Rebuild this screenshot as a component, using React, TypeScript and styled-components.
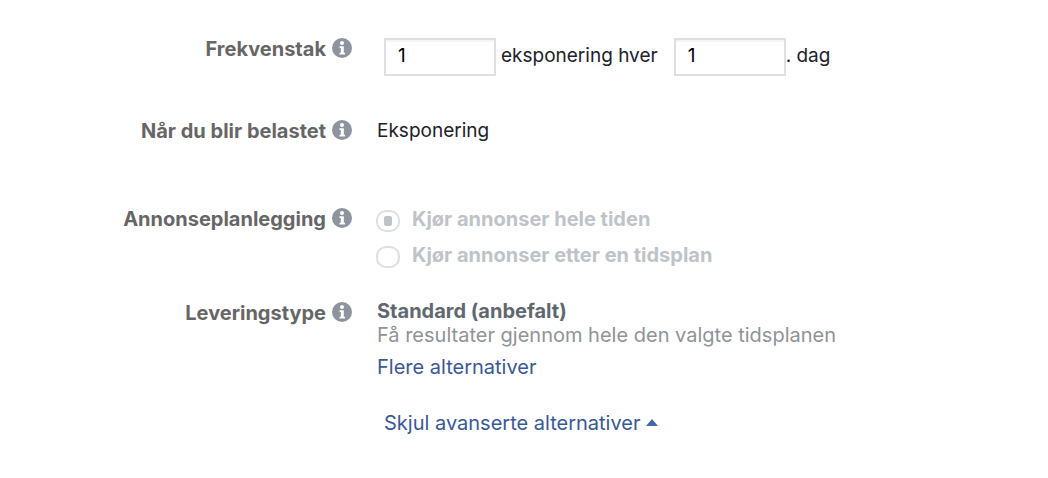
import React from "react";
import styled, { createGlobalStyle } from "styled-components";

const GlobalStyle = createGlobalStyle`
  *, *::before, *::after { box-sizing: border-box; }
  body {
    margin: 0;
    background: #fff;
    color: #1d2129;
    font: 400 20px/24px Inter, "Liberation Sans", sans-serif;
  }
`;

const Form = styled.form`
  padding: 37px 0 32px;
`;

const Row = styled.div<{ $after: number }>`
  display: grid;
  grid-template-columns: minmax(0, 352px) minmax(0, 1fr);
  column-gap: 25px;
  align-items: start;
  margin-bottom: ${(p) => p.$after}px;
`;

const LabelCell = styled.div<{ $drop?: boolean }>`
  display: flex;
  justify-content: flex-end;
  align-items: center;
  gap: 6px;
  padding-top: ${(p) => (p.$drop ? 2 : 0)}px;
  color: #666;
  font-weight: 700;
`;

const InfoButton = styled.button`
  display: block;
  width: 20px;
  height: 20px;
  margin-bottom: 2px;
  padding: 0;
  border: 0;
  background: none;
  cursor: pointer;

  svg { display: block; }
`;

const Frequency = styled.div`
  display: flex;
  align-items: flex-start;
  padding: 1px 0 0 7px;
  font-size: 19px;
`;

const NumberInput = styled.input`
  width: 112px;
  height: 38px;
  padding: 0 12px 4px;
  border: 2px solid #dddfe2;
  border-radius: 0;
  background: #fff;
  box-shadow: inset 0 2px 0 #f3f4f5;
  color: #000;
  font: inherit;
  outline: none;
`;

const Between = styled.span`
  padding: 6px 16px 0 5px;
`;

const After = styled.span`
  padding-top: 6px;
`;

const Value = styled.div`
  font-size: 19px;
`;

const Options = styled.div`
  display: flex;
  flex-direction: column;
  gap: 12px;
`;

const Option = styled.label`
  display: flex;
  align-items: center;
  gap: 12px;
  height: 24px;
  margin-left: -1px;
  color: #bec3c9;
  font-weight: 700;
`;

const Radio = styled.input`
  appearance: none;
  display: grid;
  place-items: center;
  width: 24px;
  height: 22px;
  margin: 4px 0 0;
  border: 2px solid #dddfe2;
  border-radius: 10px;
  background: #fff;

  &:checked::before {
    content: "";
    width: 8px;
    height: 10px;
    border-radius: 2px;
    background: #bec3c9;
  }
`;

const Strong = styled.div`
  color: #606770;
  font-weight: 700;
`;

const Hint = styled.div`
  margin-bottom: 8px;
  color: #909397;
`;

const Link = styled.a`
  color: #385898;
  text-decoration: none;
`;

const Toggle = styled.button`
  display: flex;
  align-items: center;
  gap: 6px;
  margin-left: 7px;
  padding: 0;
  border: 0;
  background: none;
  color: #385898;
  font: inherit;
  cursor: pointer;

  svg { margin-bottom: 2px; }
`;

const Info = ({ topic }: { topic: string }) => (
  <InfoButton type="button" aria-label={topic}>
    <svg width="20" height="20" viewBox="0 0 20 20" aria-hidden="true">
      <circle cx="10" cy="10" r="10" fill="#8d949e" />
      <circle cx="10" cy="5" r="2" fill="#fff" />
      <path d="M7.5 8.2h4.3v6.6h1.2v1.7H7.5v-1.7h1.3V9.9H7.5z" fill="#fff" />
    </svg>
  </InfoButton>
);

export default function App() {
  return (
    <>
      <GlobalStyle />
      <Form>
        <Row $after={43}>
          <LabelCell>
            <label htmlFor="exposures">Frekvenstak</label>
            <Info topic="Frekvenstak" />
          </LabelCell>
          <Frequency>
            <NumberInput id="exposures" type="text" inputMode="numeric" defaultValue="1" />
            <Between>eksponering hver</Between>
            <NumberInput id="days" type="text" inputMode="numeric" defaultValue="1" aria-labelledby="days-unit" />
            <After id="days-unit">. dag</After>
          </Frequency>
        </Row>
        <Row $after={64}>
          <LabelCell>
            <span>Når du blir belastet</span>
            <Info topic="Når du blir belastet" />
          </LabelCell>
          <Value>Eksponering</Value>
        </Row>
        <Row $after={32}>
          <LabelCell>
            <span id="schedule">Annonseplanlegging</span>
            <Info topic="Annonseplanlegging" />
          </LabelCell>
          <Options role="radiogroup" aria-labelledby="schedule">
            <Option>
              <Radio type="radio" name="schedule" defaultChecked disabled />
              Kjør annonser hele tiden
            </Option>
            <Option>
              <Radio type="radio" name="schedule" disabled />
              Kjør annonser etter en tidsplan
            </Option>
          </Options>
        </Row>
        <Row $after={32}>
          <LabelCell $drop>
            <span>Leveringstype</span>
            <Info topic="Leveringstype" />
          </LabelCell>
          <div>
            <Strong>Standard (anbefalt)</Strong>
            <Hint>Få resultater gjennom hele den valgte tidsplanen</Hint>
            <Link href="#alternativer">Flere alternativer</Link>
          </div>
        </Row>
        <Row $after={0}>
          <span />
          <Toggle type="button">
            Skjul avanserte alternativer
            <svg width="12" height="7" viewBox="0 0 12 7" aria-hidden="true">
              <path d="M0 7 6 0l6 7z" fill="#4267b2" />
            </svg>
          </Toggle>
        </Row>
      </Form>
    </>
  );
}
